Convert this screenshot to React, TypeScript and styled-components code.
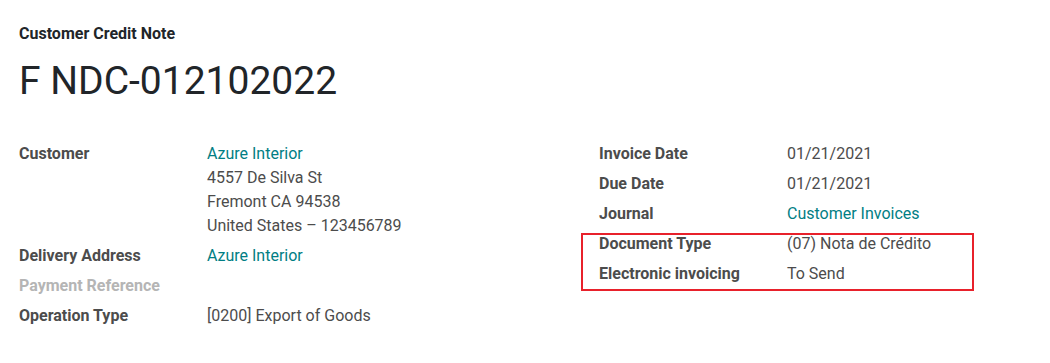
import React from "react";
import styled, { createGlobalStyle } from "styled-components";

const GlobalStyle = createGlobalStyle`
  body {
    margin: 0;
    background: #ffffff;
    font-family: Roboto, "Liberation Sans", sans-serif;
    color: #4c4c4c;
  }
`;

const Sheet = styled.div`
  padding: 24px 19px 0;
  width: 1050px;
  height: 363px;
  box-sizing: border-box;
`;

const Kind = styled.div`
  font-size: 16px;
  line-height: 20px;
  font-weight: 700;
  color: #212529;
`;

const Name = styled.h1`
  margin: 14px 0 0;
  font-size: 39px;
  line-height: 46px;
  font-weight: 400;
  color: #212529;
`;

const Groups = styled.div`
  display: grid;
  grid-template-columns: 580px 1fr;
  margin-top: 35px;
`;

const Group = styled.div`
  display: flex;
  flex-direction: column;
`;

const Row = styled.div`
  display: grid;
  grid-template-columns: 188px 1fr;
  padding: 3px 0;
  font-size: 16px;
  line-height: 24px;
`;

const Label = styled.div<{ $muted?: boolean }>`
  font-weight: 700;
  color: ${({ $muted }) => ($muted ? "#b5b5b5" : "#4c4c4c")};
`;

const Value = styled.div`
  color: #4c4c4c;
`;

const Link = styled.a`
  color: #017e84;
  text-decoration: none;
`;

const Highlight = styled.div`
  position: relative;
  &::after {
    content: "";
    position: absolute;
    left: -18px;
    top: 4px;
    bottom: -2px;
    width: 393px;
    border: 2px solid #e8212b;
    box-sizing: border-box;
    pointer-events: none;
  }
`;

export default function App() {
  return (
    <Sheet>
      <GlobalStyle />
      <Kind>Customer Credit Note</Kind>
      <Name>F NDC-012102022</Name>
      <Groups>
        <Group>
          <Row>
            <Label>Customer</Label>
            <Value>
              <Link>Azure Interior</Link>
              <div>4557 De Silva St</div>
              <div>Fremont CA 94538</div>
              <div>United States – 123456789</div>
            </Value>
          </Row>
          <Row>
            <Label>Delivery Address</Label>
            <Value>
              <Link>Azure Interior</Link>
            </Value>
          </Row>
          <Row>
            <Label $muted>Payment Reference</Label>
            <Value />
          </Row>
          <Row>
            <Label>Operation Type</Label>
            <Value>[0200] Export of Goods</Value>
          </Row>
        </Group>
        <Group>
          <Row>
            <Label>Invoice Date</Label>
            <Value>01/21/2021</Value>
          </Row>
          <Row>
            <Label>Due Date</Label>
            <Value>01/21/2021</Value>
          </Row>
          <Row>
            <Label>Journal</Label>
            <Value>
              <Link>Customer Invoices</Link>
            </Value>
          </Row>
          <Highlight>
            <Row>
              <Label>Document Type</Label>
              <Value>(07) Nota de Crédito</Value>
            </Row>
            <Row>
              <Label>Electronic invoicing</Label>
              <Value>To Send</Value>
            </Row>
          </Highlight>
        </Group>
      </Groups>
    </Sheet>
  );
}
